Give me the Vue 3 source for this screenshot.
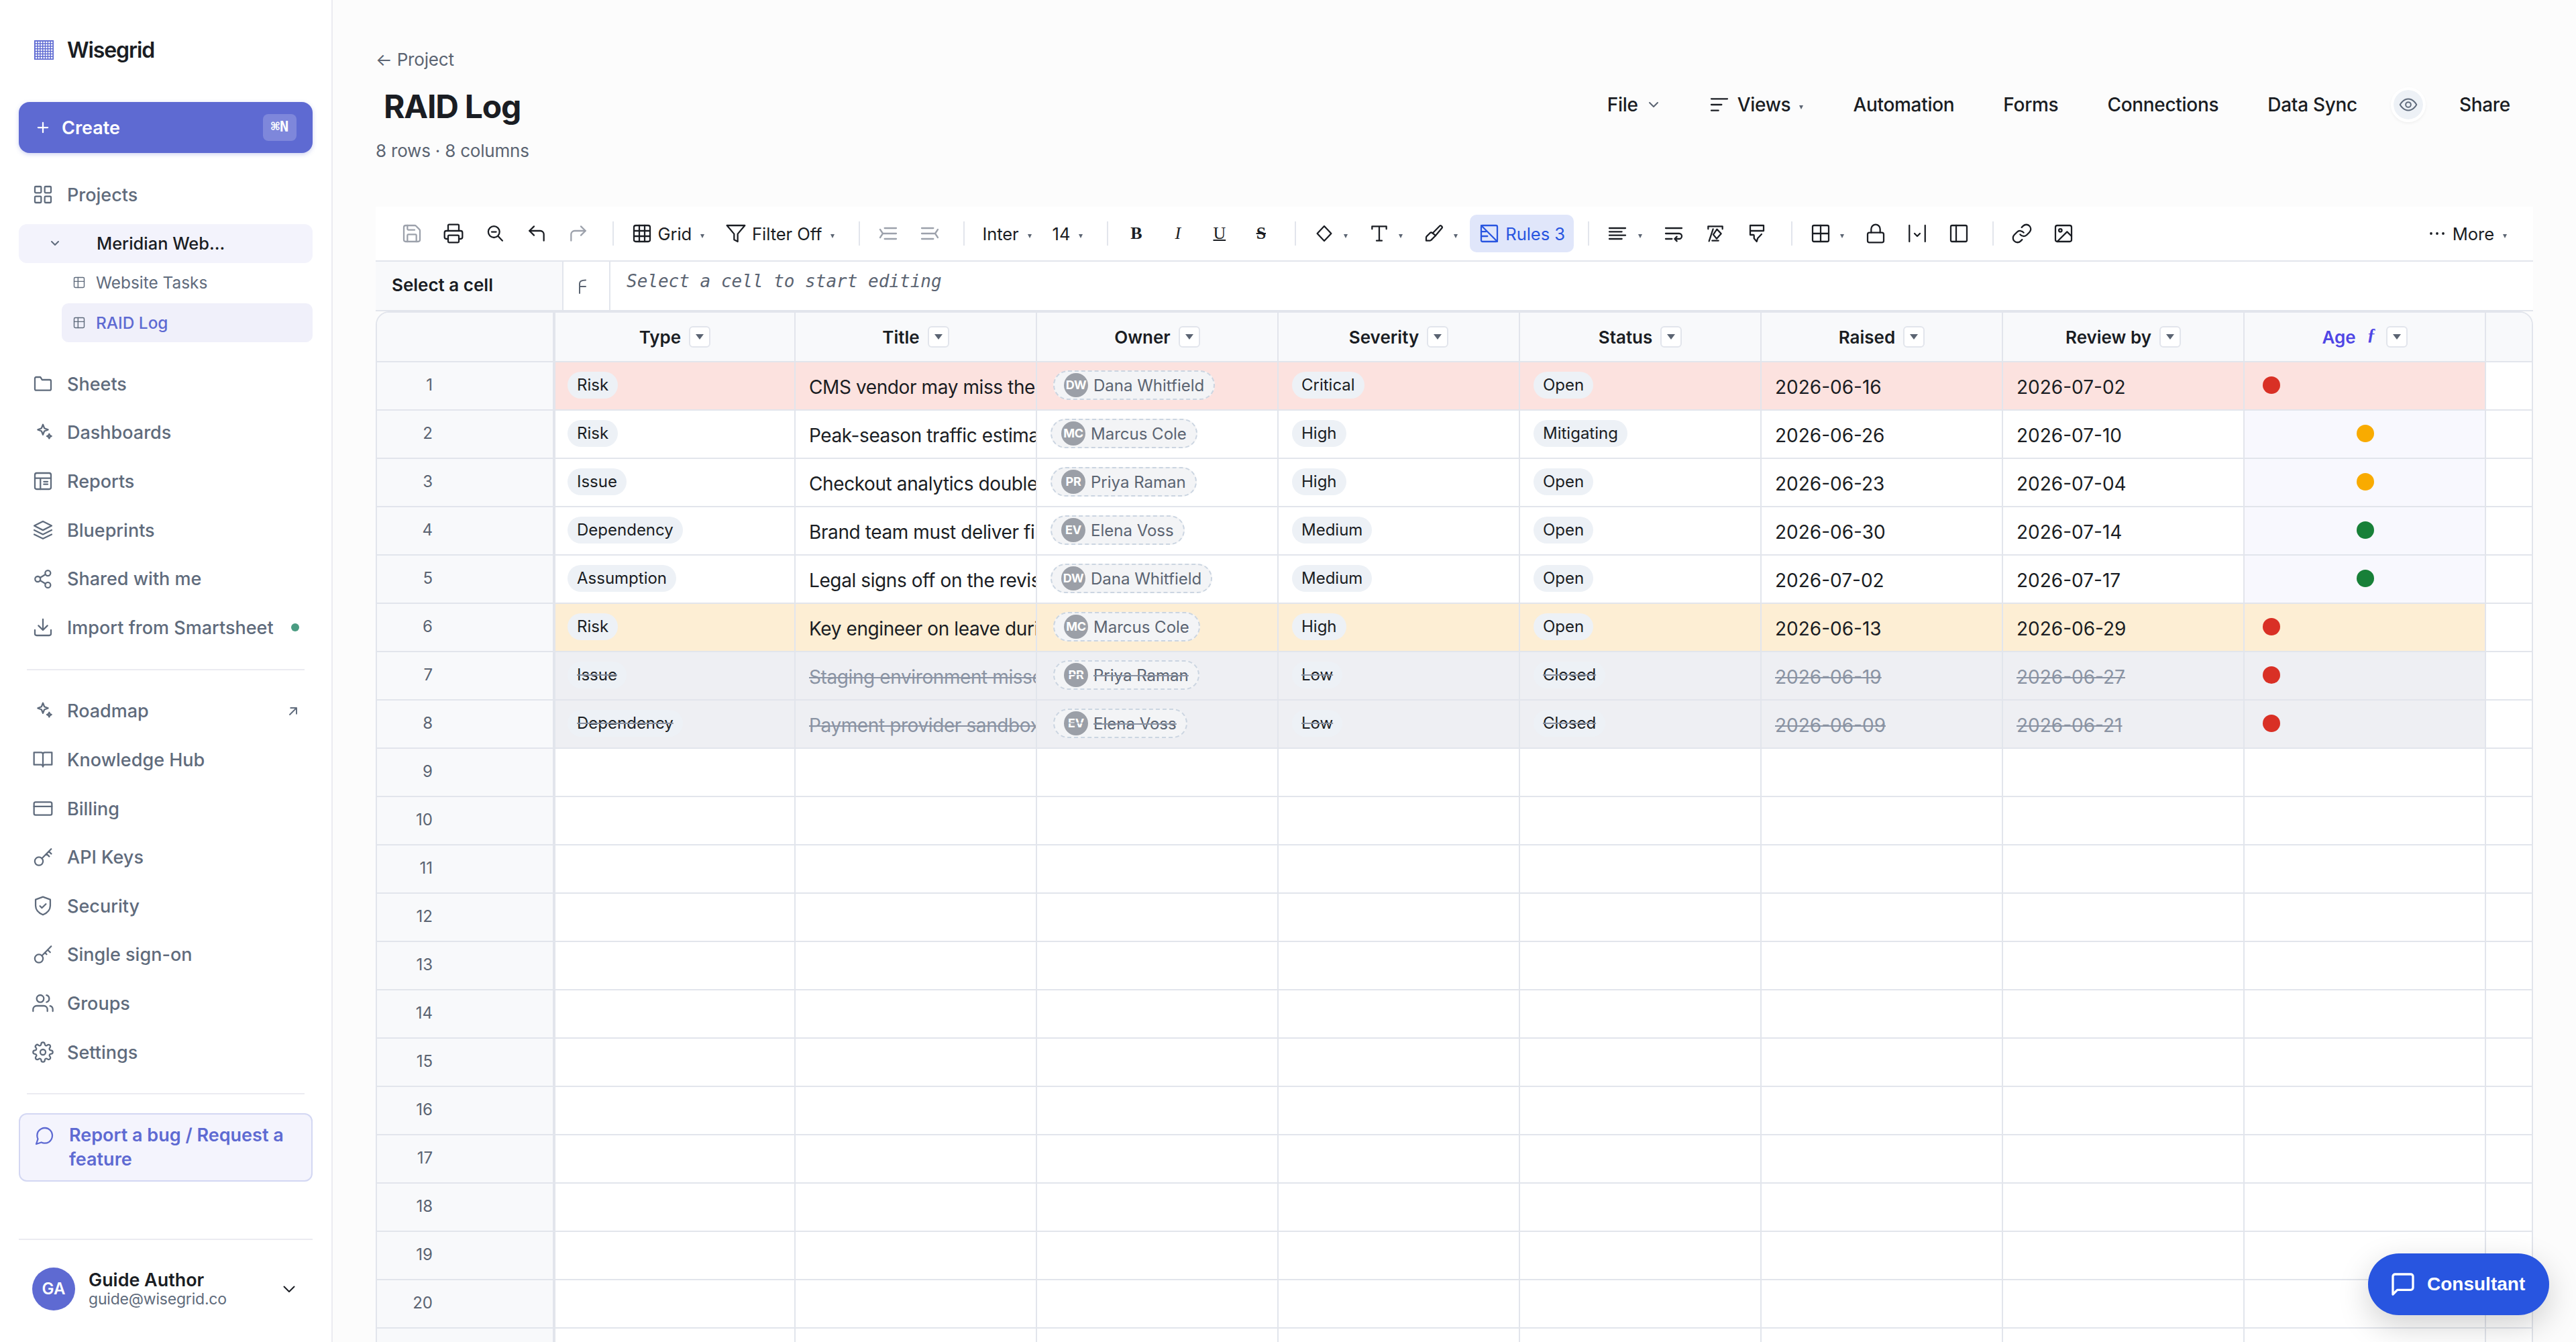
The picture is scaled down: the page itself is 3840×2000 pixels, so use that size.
<template>
  <div class="app">
    <aside class="sidebar">
      <div class="brand">
        <svg class="brand-mark" viewBox="0 0 29 29">
          <rect width="29" height="29" fill="#5e6ad2" />
          <template v-for="r in 7" :key="r">
            <rect v-for="c in 7" :key="c" :x="c * 3.84 - 1.95" :y="r * 3.84 - 1.95" width="2.4" height="2.4" fill="#fff" />
          </template>
        </svg>
        <span>Wisegrid</span>
      </div>

      <button class="create">
        <svg class="create-plus" viewBox="0 0 24 24"><path d="M12 2.500v19M2.500 12h19" /></svg>
        <span>Create</span>
        <kbd>⌘N</kbd>
      </button>

      <a class="nav-item">
        <svg class="icon" viewBox="0 0 24 24" v-html="icons.projects"></svg>
        <span>Projects</span>
      </a>
      <div class="tree">
        <div class="tree-project">
          <svg class="tree-chevron" viewBox="0 0 12 7"><path d="M1 1l5 5 5-5" /></svg>
          <span>Meridian Web...</span>
        </div>
        <div class="tree-sheet" v-for="s in projectSheets" :key="s.name" :class="{ active: s.active }">
          <svg class="icon tiny" viewBox="0 0 24 24" v-html="icons.sheet"></svg>
          <span>{{ s.name }}</span>
        </div>
      </div>

      <a class="nav-item" v-for="n in mainNav" :key="n.label">
        <svg class="icon" viewBox="0 0 24 24" v-html="icons[n.icon]"></svg>
        <span>{{ n.label }}</span>
        <i v-if="n.dot" class="nav-dot"></i>
      </a>
      <hr class="divider" />
      <a class="nav-item" v-for="n in moreNav" :key="n.label">
        <svg class="icon" viewBox="0 0 24 24" v-html="icons[n.icon]"></svg>
        <span>{{ n.label }}</span>
        <svg v-if="n.external" class="icon external" viewBox="0 0 24 24" v-html="icons.external"></svg>
      </a>
      <hr class="divider" />

      <button class="report">
        <svg class="icon" viewBox="0 0 24 24" v-html="icons.bubble"></svg>
        <span>Report a bug / Request a feature</span>
      </button>

      <div class="account">
        <div class="avatar">GA</div>
        <div class="account-text">
          <strong>Guide Author</strong>
          <span>guide@wisegrid.co</span>
        </div>
        <svg class="account-chevron" viewBox="0 0 18 11"><path d="M1.500 1.500L9 9l7.500-7.500" /></svg>
      </div>
    </aside>

    <main class="main">
      <header class="page-header">
        <div class="page-title">
          <a class="back">← Project</a>
          <h1>RAID Log</h1>
          <p>8 rows · 8 columns</p>
        </div>
        <div class="actions">
          <button class="file">File <svg viewBox="0 0 14 9"><path d="M1 1l6 6 6-6" /></svg></button>
          <button class="views">
            <svg class="icon" viewBox="0 0 24 24" v-html="icons.views"></svg>
            Views <i class="caret"></i>
          </button>
          <button>Automation</button>
          <button>Forms</button>
          <button>Connections</button>
          <button>Data Sync</button>
          <span class="watch"><svg class="icon" viewBox="0 0 24 24" v-html="icons.eye"></svg></span>
          <button>Share</button>
        </div>
      </header>

      <div class="toolbar">
        <template v-for="(t, i) in tools" :key="i">
          <span v-if="t.sep" class="sep"></span>
          <button v-else class="tool" :class="{ disabled: t.disabled, on: t.on, wide: t.wide }">
            <svg v-if="t.icon" class="icon" viewBox="0 0 24 24" v-html="icons[t.icon]"></svg>
            <span v-if="t.label">{{ t.label }}</span>
            <span v-if="t.letter" class="letter" :class="t.kind">{{ t.letter }}</span>
            <i v-if="t.caret" class="caret"></i>
          </button>
        </template>
        <button class="tool more">
          <svg class="dots" viewBox="0 0 24 6"><circle cx="3" cy="3" r="1.9" /><circle cx="12" cy="3" r="1.9" /><circle cx="21" cy="3" r="1.9" /></svg>
          <span>More</span>
          <i class="caret"></i>
        </button>
      </div>

      <div class="formula">
        <div class="formula-cell">Select a cell</div>
        <div class="formula-fx"><svg viewBox="0 0 12 22"><path d="M2 21V6.500C2 3 4.500 1.500 11 1.500M2 11h9" /></svg></div>
        <div class="formula-input">Select a cell to start editing</div>
      </div>

      <div class="sheet">
        <div class="row head">
          <div class="num"></div>
          <div class="cell" v-for="c in columns" :key="c" :class="{ computed: c === 'Age' }">
            <span>{{ c }}</span>
            <em v-if="c === 'Age'">ƒ</em>
            <span class="col-menu"><svg viewBox="0 0 12 8"><path d="M0 0h12L6 8z" /></svg></span>
          </div>
          <div class="tail"></div>
        </div>
        <div class="row" v-for="(r, i) in rows" :key="i" :class="r.tone">
          <div class="num">{{ i + 1 }}</div>
          <div class="cell"><span class="chip">{{ r.type }}</span></div>
          <div class="cell title"><span>{{ r.title }}</span></div>
          <div class="cell owner">
            <span class="person"><b>{{ r.initials }}</b><span>{{ r.owner }}</span></span>
          </div>
          <div class="cell"><span class="chip">{{ r.severity }}</span></div>
          <div class="cell"><span class="chip">{{ r.status }}</span></div>
          <div class="cell date"><span>{{ r.raised }}</span></div>
          <div class="cell date"><span>{{ r.review }}</span></div>
          <div class="cell age"><i class="light" :class="r.age"></i></div>
          <div class="tail"></div>
        </div>
        <div class="row" v-for="n in 13" :key="'e' + n">
          <div class="num">{{ n + 8 }}</div>
          <div class="cell" v-for="c in columns" :key="c"></div>
          <div class="tail"></div>
        </div>
      </div>
    </main>

    <button class="consultant">
      <svg class="icon" viewBox="0 0 24 24" v-html="icons.message"></svg>
      <span>Consultant</span>
    </button>
  </div>
</template>

<script setup>
const icons = {
  projects: '<rect x="3" y="3" width="7" height="7" rx="1"/><rect x="14" y="3" width="7" height="7" rx="1"/><rect x="3" y="14" width="7" height="7" rx="1"/><rect x="14" y="14" width="7" height="7" rx="1"/>',
  sheet: '<rect x="3" y="3" width="18" height="18" rx="2"/><path d="M3 10h18M10 3v18"/>',
  folder: '<path d="M4.500 4.500h4.200a1 1 0 0 1 .8.5l1.500 2.500h8.500A1.500 1.500 0 0 1 21 9v8.800a1.500 1.500 0 0 1-1.500 1.500h-15A1.500 1.500 0 0 1 3 17.800V6a1.500 1.500 0 0 1 1.500-1.500z"/>',
  sparkles: '<path d="M12 2.800l1.600 4.100 4.100 1.600-4.100 1.600-1.600 4.100-1.600-4.100-4.100-1.600 4.100-1.600z"/><path d="M19 13.300l.8 1.700 1.700.8-1.700.8-.8 1.700-.8-1.700-1.700-.8 1.700-.8z"/>',
  report: '<rect x="3" y="3" width="18" height="18" rx="2"/><path d="M3 8.800h18M9.200 8.800V21M13 12.600h4.300M13 15.500h4.300"/>',
  layers: '<path d="M12 2.300L2.300 7.200 12 12.100l9.700-4.900z"/><path d="M2.300 12l9.700 4.800 9.700-4.800M2.300 16.800l9.700 4.800 9.700-4.800"/>',
  share: '<circle cx="17.500" cy="5.300" r="3"/><circle cx="6.200" cy="12" r="3"/><circle cx="17.500" cy="18.700" r="3"/><path d="M8.800 13.500l6.100 3.700M14.900 6.800l-6.100 3.700"/>',
  import: '<path d="M21 15v4a2 2 0 0 1-2 2H5a2 2 0 0 1-2-2v-4M7 10l5 5 5-5M12 15V3"/>',
  external: '<path d="M6 18L18 6M7.500 6H18v10.500"/>',
  book: '<path d="M2 4h8a2 2 0 0 1 2 2v14a2.300 2.300 0 0 0-2-2.200H2zM22 4h-8a2 2 0 0 0-2 2v14a2.300 2.300 0 0 1 2-2.200h8z"/>',
  card: '<rect x="2" y="4.800" width="20" height="14.400" rx="1.800"/><path d="M2 9.600h20"/>',
  key: '<circle cx="7.500" cy="16.200" r="4.600"/><path d="M10.900 13L21.200 2.400M15.900 7.800l3.100 3M18.500 5.100l2.800 2.700"/>',
  sso: '<circle cx="7.500" cy="16.200" r="4.600"/><path d="M10.900 13L21.200 2.400M14.200 9.500l1.900 1.900M17.200 6.400l2.900 2.800"/>',
  shield: '<path d="M12 2l8.200 3v6.800c0 4.900-3.600 8.200-8.200 10.200-4.600-2-8.200-5.300-8.200-10.200V5z"/><path d="M8.700 12.200l2.200 2.100 4.400-4.400"/>',
  users: '<path d="M17 21v-2a4 4 0 0 0-4-4H5a4 4 0 0 0-4 4v2"/><circle cx="9" cy="7" r="4"/><path d="M23 21v-2a4 4 0 0 0-3-3.870M16 3.130a4 4 0 0 1 0 7.750"/>',
  gear: '<circle cx="12" cy="12" r="3"/><path d="M19.400 15a1.650 1.650 0 0 0 .33 1.820l.06.06a2 2 0 1 1-2.830 2.830l-.06-.06a1.650 1.650 0 0 0-1.820-.33 1.650 1.650 0 0 0-1 1.510V21a2 2 0 0 1-4 0v-.09A1.650 1.650 0 0 0 9 19.400a1.650 1.650 0 0 0-1.820.33l-.06.06a2 2 0 1 1-2.830-2.830l.06-.06a1.650 1.650 0 0 0 .33-1.820 1.650 1.650 0 0 0-1.510-1H3a2 2 0 0 1 0-4h.09A1.650 1.650 0 0 0 4.600 9a1.650 1.650 0 0 0-.33-1.820l-.06-.06a2 2 0 1 1 2.830-2.830l.06.06a1.650 1.650 0 0 0 1.820.33H9a1.650 1.650 0 0 0 1-1.510V3a2 2 0 0 1 4 0v.09a1.650 1.650 0 0 0 1 1.510 1.650 1.650 0 0 0 1.820-.33l.06-.06a2 2 0 1 1 2.830 2.830l-.06.06a1.650 1.650 0 0 0-.33 1.820V9a1.650 1.650 0 0 0 1.510 1H21a2 2 0 0 1 0 4h-.09a1.650 1.650 0 0 0-1.510 1z"/>',
  bubble: '<path d="M21 11.500a8.380 8.380 0 0 1-.9 3.800 8.500 8.500 0 0 1-7.600 4.700 8.380 8.380 0 0 1-3.800-.9L3 21l1.900-5.700a8.380 8.380 0 0 1-.9-3.800 8.500 8.500 0 0 1 4.700-7.600 8.380 8.380 0 0 1 3.800-.9h.5a8.480 8.480 0 0 1 8 8v.5z"/>',
  message: '<path d="M21 15a2 2 0 0 1-2 2H7l-4 4V5a2 2 0 0 1 2-2h14a2 2 0 0 1 2 2z"/>',
  views: '<path d="M3 5.500h18M3 12h11.500M3 18.500h8"/>',
  eye: '<path d="M1.500 12S5.200 4.800 12 4.800 22.500 12 22.500 12 18.800 19.200 12 19.200 1.500 12 1.500 12z"/><circle cx="12" cy="12" r="3.300"/>',
  save: '<path d="M15.200 3a2 2 0 0 1 1.400.6l3.800 3.800a2 2 0 0 1 .6 1.400V19a2 2 0 0 1-2 2H5a2 2 0 0 1-2-2V5a2 2 0 0 1 2-2z"/><path d="M17 21v-7a1 1 0 0 0-1-1H8a1 1 0 0 0-1 1v7M7 3v4a1 1 0 0 0 1 1h7"/>',
  print: '<path d="M6 18H4a2 2 0 0 1-2-2v-5a2 2 0 0 1 2-2h16a2 2 0 0 1 2 2v5a2 2 0 0 1-2 2h-2"/><path d="M6 9V3a1 1 0 0 1 1-1h10a1 1 0 0 1 1 1v6"/><rect x="6" y="14" width="12" height="8" rx="1"/>',
  zoomOut: '<circle cx="10.700" cy="10.200" r="6.300"/><path d="M15.400 15l4.800 5M8.200 10.200h5"/>',
  undo: '<path d="M9 14L4 9l5-5"/><path d="M20 20v-7a4 4 0 0 0-4-4H4"/>',
  redo: '<path d="M15 14l5-5-5-5"/><path d="M4 20v-7a4 4 0 0 1 4-4h12"/>',
  grid: '<rect x="3" y="3" width="18" height="18" rx="2"/><path d="M3 9h18M3 15h18M9 3v18M15 3v18"/>',
  filter: '<path d="M22 3H2l8 9.460V19l4 2v-8.540z"/>',
  outdent: '<path d="M3 7.500L6 12l-3 4.500M8 6h13M6 12h15M8 18h13"/>',
  indent: '<path d="M21 7.500L18 12l3 4.500M3 6h13M3 12h15M3 18h13"/>',
  fill: '<path d="M12 3.800L19.800 12 12 20.200 4.200 12z"/>',
  type: '<path d="M4 7V4h16v3M9 20h6M12 4v16"/>',
  brush: '<path d="M13.400 14.400l7.400-8.700a1 1 0 0 0-.1-1.300l-1-1a1 1 0 0 0-1.400 0l-8.100 8.200"/><path d="M10.200 11.600l3.200 2.800-4.900 5a1.800 1.800 0 0 1-1.300.6H3v-3.500a2 2 0 0 1 .6-1.400l3.700-3.700a2 2 0 0 1 2.900.2z"/>',
  rules: '<rect x="3" y="3" width="18" height="18" rx="1.500"/><path d="M3 3l18 18M3 9.800h5.500M3 15h7"/>',
  align: '<path d="M3 6h18M3 10h14M3 14h18M3 18h14"/>',
  wrap: '<path d="M3 6h18M3 12h15a3 3 0 1 1 0 6h-5M3 18h7M15.500 15.500L13 18l2.500 2.500"/>',
  clear: '<path d="M4 7V4h16v3M5 20.500L9.500 7M13.800 7.200l4.700 5-5 5.600-3.800-4.600zM8.500 20h7"/>',
  paint: '<path d="M4.500 3h15v6h-15zM4.500 9v4.500h3.300a1 1 0 0 1 1 1v3l3 3.500 1-3.500 4.400-4.700"/>',
  borders: '<rect x="3" y="3" width="18" height="18" rx="1.500"/><path d="M3 12h18M12 3v18"/>',
  lock: '<rect x="3" y="11" width="18" height="11" rx="2"/><path d="M7 11V7a5 5 0 0 1 10 0v4"/>',
  width: '<path d="M3.200 3v18M20.800 3v18M9 12l3 3 3-3"/>',
  freeze: '<rect x="3" y="3" width="18" height="18" rx="1.500"/><path d="M9 3v18"/>',
  link: '<path d="M10 13a5 5 0 0 0 7.540.54l3-3a5 5 0 0 0-7.070-7.070l-1.720 1.710"/><path d="M14 11a5 5 0 0 0-7.540-.54l-3 3a5 5 0 0 0 7.070 7.070l1.710-1.710"/>',
  image: '<rect x="3" y="3" width="18" height="18" rx="2"/><circle cx="8.500" cy="8.500" r="1.700"/><path d="M21 15l-5-5L5 21"/>',
}

const projectSheets = [
  { name: 'Website Tasks' },
  { name: 'RAID Log', active: true },
]

const mainNav = [
  { label: 'Sheets', icon: 'folder' },
  { label: 'Dashboards', icon: 'sparkles' },
  { label: 'Reports', icon: 'report' },
  { label: 'Blueprints', icon: 'layers' },
  { label: 'Shared with me', icon: 'share' },
  { label: 'Import from Smartsheet', icon: 'import', dot: true },
]

const moreNav = [
  { label: 'Roadmap', icon: 'sparkles', external: true },
  { label: 'Knowledge Hub', icon: 'book' },
  { label: 'Billing', icon: 'card' },
  { label: 'API Keys', icon: 'key' },
  { label: 'Security', icon: 'shield' },
  { label: 'Single sign-on', icon: 'sso' },
  { label: 'Groups', icon: 'users' },
  { label: 'Settings', icon: 'gear' },
]

const tools = [
  { icon: 'save', disabled: true },
  { icon: 'print' },
  { icon: 'zoomOut' },
  { icon: 'undo' },
  { icon: 'redo', disabled: true },
  { sep: true },
  { icon: 'grid', label: 'Grid', caret: true },
  { icon: 'filter', label: 'Filter Off', caret: true },
  { sep: true },
  { icon: 'outdent', disabled: true },
  { icon: 'indent', disabled: true },
  { sep: true },
  { label: 'Inter', caret: true },
  { label: '14', caret: true },
  { sep: true },
  { letter: 'B', kind: 'bold' },
  { letter: 'I', kind: 'italic' },
  { letter: 'U', kind: 'underline' },
  { letter: 'S', kind: 'strike' },
  { sep: true },
  { icon: 'fill', caret: true },
  { icon: 'type', caret: true },
  { icon: 'brush', caret: true },
  { icon: 'rules', label: 'Rules 3', on: true },
  { sep: true },
  { icon: 'align', caret: true, wide: true },
  { icon: 'wrap' },
  { icon: 'clear' },
  { icon: 'paint' },
  { sep: true },
  { icon: 'borders', caret: true },
  { icon: 'lock' },
  { icon: 'width' },
  { icon: 'freeze' },
  { sep: true },
  { icon: 'link' },
  { icon: 'image' },
]

const columns = ['Type', 'Title', 'Owner', 'Severity', 'Status', 'Raised', 'Review by', 'Age']

const rows = [
  { type: 'Risk', title: 'CMS vendor may miss the', initials: 'DW', owner: 'Dana Whitfield', severity: 'Critical', status: 'Open', raised: '2026-06-16', review: '2026-07-02', age: 'red', tone: 'critical ruled' },
  { type: 'Risk', title: 'Peak-season traffic estima', initials: 'MC', owner: 'Marcus Cole', severity: 'High', status: 'Mitigating', raised: '2026-06-26', review: '2026-07-10', age: 'amber' },
  { type: 'Issue', title: 'Checkout analytics double', initials: 'PR', owner: 'Priya Raman', severity: 'High', status: 'Open', raised: '2026-06-23', review: '2026-07-04', age: 'amber' },
  { type: 'Dependency', title: 'Brand team must deliver fi', initials: 'EV', owner: 'Elena Voss', severity: 'Medium', status: 'Open', raised: '2026-06-30', review: '2026-07-14', age: 'green' },
  { type: 'Assumption', title: 'Legal signs off on the revis', initials: 'DW', owner: 'Dana Whitfield', severity: 'Medium', status: 'Open', raised: '2026-07-02', review: '2026-07-17', age: 'green' },
  { type: 'Risk', title: 'Key engineer on leave duri', initials: 'MC', owner: 'Marcus Cole', severity: 'High', status: 'Open', raised: '2026-06-13', review: '2026-06-29', age: 'red', tone: 'warning ruled' },
  { type: 'Issue', title: 'Staging environment misse', initials: 'PR', owner: 'Priya Raman', severity: 'Low', status: 'Closed', raised: '2026-06-19', review: '2026-06-27', age: 'red', tone: 'closed ruled' },
  { type: 'Dependency', title: 'Payment provider sandbox', initials: 'EV', owner: 'Elena Voss', severity: 'Low', status: 'Closed', raised: '2026-06-09', review: '2026-06-21', age: 'red', tone: 'closed ruled' },
]
</script>

<style>
body {
  background: #fcfcfc;
  overflow: hidden;
}
</style>

<style scoped>
.app {
  display: flex;
  width: 3840px;
  height: 2000px;
  overflow: hidden;
  background: #fcfcfc;
  color: #1a1d23;
  font-family: Inter, "Liberation Sans", sans-serif;
  font-size: 26px;
}

.app *,
.app *::before {
  box-sizing: border-box;
}

button {
  border: 0;
  background: none;
  font: inherit;
  letter-spacing: inherit;
  color: inherit;
  padding: 0;
  text-align: left;
}

svg {
  flex: none;
  fill: none;
  stroke: currentColor;
  stroke-width: 2;
  stroke-linecap: round;
  stroke-linejoin: round;
}

.icon {
  width: 32px;
  height: 32px;
  stroke-width: 1.7;
}

/* sidebar */
.sidebar {
  flex: none;
  display: flex;
  flex-direction: column;
  width: 496px;
  height: 2000px;
  padding: 0 28px;
  background: #fff;
  border-right: 2px solid #ebebf1;
  font-size: 27px;
}

.brand {
  flex: none;
  display: flex;
  align-items: center;
  gap: 20px;
  height: 152px;
  padding: 0 0 4px 23px;
  font-size: 32px;
  font-weight: 600;
  letter-spacing: -1.1px;
}

.brand-mark {
  width: 29px;
  height: 29px;
  stroke: none;
}

.create {
  flex: none;
  display: flex;
  align-items: center;
  height: 76px;
  padding: 0 24px 0 27px;
  margin-bottom: 26px;
  border-radius: 16px;
  background: #5e6ad2;
  box-shadow: 0 2px 6px rgba(94, 106, 210, 0.3);
  color: #fff;
  font-weight: 600;
}

.create-plus {
  width: 18px;
  height: 18px;
  margin-right: 19px;
  stroke-width: 3;
}

.create kbd {
  margin-left: auto;
  width: 50px;
  height: 40px;
  border-radius: 8px;
  background: rgba(255, 255, 255, 0.2);
  font: 700 22px/37px "DejaVu Sans Mono", monospace;
  text-align: center;
}

.nav-item {
  flex: none;
  display: flex;
  align-items: center;
  height: 72.600px;
  padding: 0 20px;
  color: #5f6b7c;
  font-weight: 500;
}

.nav-item > span {
  margin-left: 20px;
}

.nav-dot {
  width: 12px;
  height: 12px;
  margin-left: auto;
  border-radius: 50%;
  background: #4a9c82;
}

.external {
  width: 20px;
  height: 20px;
  margin-left: auto;
  margin-right: -1px;
  stroke-width: 2.300;
}

.tree {
  flex: none;
  height: 209.400px;
  padding-top: 7.400px;
}

.tree-project {
  display: flex;
  align-items: center;
  height: 58px;
  padding-left: 48px;
  border-radius: 12px;
  background: #f3f3fc;
  font-size: 25.400px;
  font-weight: 500;
}

.tree-chevron {
  width: 12px;
  height: 7px;
  margin-right: 56px;
  color: #5f6b7c;
  overflow: visible;
}

.tree-sheet {
  display: flex;
  align-items: center;
  gap: 15px;
  height: 58px;
  margin: 0 0 2px 64px;
  padding-left: 16px;
  border-radius: 10px;
  color: #5f6b7c;
  font-size: 24.400px;
}

.tree-sheet.active {
  background: #f0f0fa;
  color: #5e6ad2;
  font-weight: 500;
}

.tiny {
  width: 20px;
  height: 20px;
  color: #5f6b7c;
}

.divider {
  flex: none;
  width: 414px;
  height: 2px;
  margin: 25px 12px;
  border: 0;
  background: #ebebf1;
}

.report {
  flex: none;
  display: flex;
  height: 102px;
  margin-top: 3px;
  padding: 13px 10px 0 20px;
  border: 2px solid #d3d7f3;
  border-radius: 12px;
  background: #f4f4fd;
  color: #5e6ad2;
  font-weight: 600;
  line-height: 36px;
}

.report .icon {
  margin: 3px 21px 0 0;
}

.account {
  flex: none;
  display: flex;
  align-items: center;
  height: 148px;
  margin-top: auto;
  margin-bottom: 6px;
  padding: 0 26px 0 20px;
  border-top: 2px solid #ebebf1;
}

.avatar {
  width: 64px;
  height: 64px;
  margin-right: 20px;
  border-radius: 50%;
  background: #5e6ad2;
  color: #fff;
  font-size: 24px;
  font-weight: 600;
  line-height: 64px;
  text-align: center;
}

.account-text {
  display: flex;
  flex-direction: column;
  line-height: 30px;
}

.account-text strong {
  font-size: 26.900px;
  font-weight: 600;
}

.account-text span {
  color: #5f6b7c;
  font-size: 23px;
  letter-spacing: -0.2px;
  line-height: 28px;
}

.account-chevron {
  width: 18px;
  height: 11px;
  margin-left: auto;
}

/* page header */
.main {
  display: flex;
  flex-direction: column;
  width: 3344px;
  padding: 0 64px;
}

.page-header {
  flex: none;
  display: flex;
  justify-content: space-between;
  height: 308px;
  padding-top: 70px;
}

.back {
  display: block;
  height: 38px;
  color: #5b6472;
  letter-spacing: -0.2px;
  line-height: 38px;
}

h1 {
  margin: 18px 0 0 12px;
  font-size: 48px;
  font-weight: 700;
  letter-spacing: -0.025em;
  line-height: 66px;
}

p {
  margin: 14px 0 0;
  color: #5b6472;
  letter-spacing: -0.2px;
  line-height: 38px;
}

.actions {
  display: flex;
  align-items: center;
  gap: 8px;
  height: 64px;
  margin-top: 54px;
  padding-right: 2px;
  font-size: 28px;
  font-weight: 500;
  letter-spacing: -0.3px;
}

.actions button {
  display: flex;
  align-items: center;
  height: 64px;
  padding: 0 32px 0 33px;
}

.file svg {
  width: 14px;
  height: 9px;
  margin-left: 16px;
  margin-right: 2px;
  color: #5b6472;
  overflow: visible;
}

.views .icon {
  margin-right: 11px;
}

.watch {
  display: flex;
  align-items: center;
  justify-content: center;
  width: 52px;
  height: 52px;
  margin: 0 9px 0 10px;
  border: 4px solid #fff;
  border-radius: 50%;
  background: #edf1f6;
  background-clip: padding-box;
  box-shadow: 0 2px 4px rgba(0, 0, 0, 0.05);
  color: #5f6b7c;
}

.watch .icon {
  width: 28px;
  height: 28px;
}

.caret {
  flex: none;
  width: 0;
  height: 0;
  margin: 8px 1px 0 13px;
  border: 3px solid transparent;
  border-top: 6px solid #5b6472;
  border-bottom: 0;
}

/* toolbar */
.toolbar {
  flex: none;
  display: flex;
  align-items: center;
  gap: 4px;
  height: 82px;
  padding: 0 30px 0 25px;
  border-bottom: 2px solid #e2e5ec;
  background: #fff;
  font-size: 25.600px;
  letter-spacing: -0.1px;
}

.tool {
  flex: none;
  display: flex;
  align-items: center;
  height: 56px;
  padding: 0 13px;
  border-radius: 10px;
}

.tool .icon + span {
  margin-left: 8px;
}

.tool.wide .caret {
  margin-left: 15px;
}

.tool.disabled {
  color: #9ca1ab;
}

.tool.on {
  background: #e0e6fa;
  color: #2855e0;
}

.sep {
  flex: none;
  width: 2px;
  height: 36px;
  margin: 0 9px 0 17.500px;
  background: #e2e5ec;
}

.letter {
  width: 32px;
  font-family: "Liberation Serif", serif;
  font-size: 26px;
  text-align: center;
}

.bold,
.strike {
  font-weight: 700;
}

.italic {
  font-style: italic;
}

.underline {
  text-decoration: underline 2px;
}

.strike {
  text-decoration: line-through;
}

.more {
  margin-left: auto;
  padding-right: 8px;
}

.more .dots {
  width: 24px;
  height: 6px;
  margin-right: 11px;
  fill: currentColor;
  stroke: none;
}

/* formula bar */
.formula {
  flex: none;
  display: flex;
  height: 74px;
  border-bottom: 2px solid #e2e5ec;
  background: #fff;
}

.formula-cell {
  width: 280px;
  padding-left: 24px;
  border-right: 2px solid #e2e5ec;
  background: #f8f9fb;
  font-weight: 600;
  line-height: 70px;
}

.formula-fx {
  display: flex;
  align-items: center;
  width: 70px;
  padding: 2px 0 0 22px;
  border-right: 2px solid #e2e5ec;
  color: #5b6472;
}

.formula-fx svg {
  width: 12px;
  height: 22px;
}

.formula-input {
  padding-left: 24px;
  color: #5b6472;
  font: italic 26px/58px "DejaVu Sans Mono", monospace;
}

/* sheet */
.sheet {
  flex: none;
  width: 3216px;
  border: 2px solid #e2e5ec;
  border-radius: 20px 20px 0 0;
  overflow: hidden;
  background: #fff;
}

.row {
  display: flex;
  height: 72px;
}

.num {
  flex: none;
  width: 264px;
  padding-right: 179px;
  border-right: 2px solid #e2e5ec;
  border-bottom: 2px solid #e2e5ec;
  background: #f8f9fb;
  color: #5b6472;
  font-size: 24px;
  line-height: 68px;
  text-align: right;
}

.cell {
  flex: none;
  display: flex;
  align-items: center;
  width: 360px;
  padding: 0 0 2px 20px;
  border-right: 2px solid #e2e5ec;
  border-bottom: 2px solid #e2e5ec;
  overflow: hidden;
  white-space: nowrap;
}

.num + .cell {
  border-left: 2px solid #e2e5ec;
  padding-left: 18px;
}

.tail {
  flex: 1;
  border-bottom: 2px solid #e2e5ec;
}

.head {
  height: 74px;
  font-weight: 600;
}

.head .cell,
.head .tail {
  background: #f8f9fb;
}

.head .cell {
  justify-content: center;
  padding: 0;
}

.col-menu {
  display: flex;
  align-items: center;
  justify-content: center;
  width: 32px;
  height: 32px;
  margin-left: 12px;
  border: 2px solid #e2e5ec;
  border-radius: 6px;
  background: #fff;
  color: #5b6472;
}

.col-menu svg {
  width: 12px;
  height: 8px;
  fill: currentColor;
  stroke: none;
}

.computed {
  color: #4f46e5;
}

.computed em {
  width: 16px;
  margin: -6px 0 0 17px;
  font-family: "Liberation Serif", serif;
  font-size: 26px;
  font-weight: 700;
  line-height: 28px;
}

.chip {
  height: 40px;
  padding: 0 14px;
  border-radius: 20px;
  background: #edf1f6;
  font-size: 24px;
  line-height: 40px;
}

.title,
.date {
  font-size: 28px;
}

.title {
  letter-spacing: -0.4px;
}

.title > span,
.date > span {
  padding-top: 6px;
}

.person {
  display: flex;
  align-items: center;
  height: 44px;
  padding: 0 14px;
  border: 2px dashed #cbd5e1;
  border-radius: 22px;
  background: #f3f4f6;
  color: #5b6472;
  font-size: 24px;
}

.person b {
  width: 36px;
  height: 36px;
  margin-right: 8px;
  border-radius: 50%;
  background: #9b9fa7;
  color: #fff;
  font-size: 18px;
  font-weight: 700;
  letter-spacing: -0.3px;
  line-height: 36px;
  text-align: center;
}

.ruled .owner {
  padding-left: 24px;
}

.age {
  justify-content: center;
  padding-left: 2px;
  background: #f8f8fe;
}

.ruled .age {
  justify-content: flex-start;
  padding-left: 27px;
}

.light {
  width: 26px;
  height: 26px;
  border-radius: 50%;
}

.red {
  background: #d93025;
}

.amber {
  background: #f9ab00;
}

.green {
  background: #188038;
}

.critical .cell {
  background: #fce2df;
}

.warning .cell {
  background: #fdeed4;
}

.closed .cell {
  background: #eeeff3;
}

.closed .title,
.closed .date {
  color: #8a93a3;
}

.closed .cell span,
.closed .person b {
  text-decoration: line-through #8a93a3;
}

/* floating chat button */
.consultant {
  position: absolute;
  left: 3530px;
  top: 1868px;
  display: flex;
  align-items: center;
  gap: 16px;
  width: 270px;
  height: 92px;
  padding-left: 32px;
  border-radius: 46px;
  background: #2855e0;
  box-shadow: 0 16px 48px rgba(0, 0, 0, 0.18);
  color: #fff;
  font: 700 28px "Liberation Sans", Arial, sans-serif;
}

.consultant .icon {
  width: 40px;
  height: 40px;
  stroke-width: 2;
}
</style>
